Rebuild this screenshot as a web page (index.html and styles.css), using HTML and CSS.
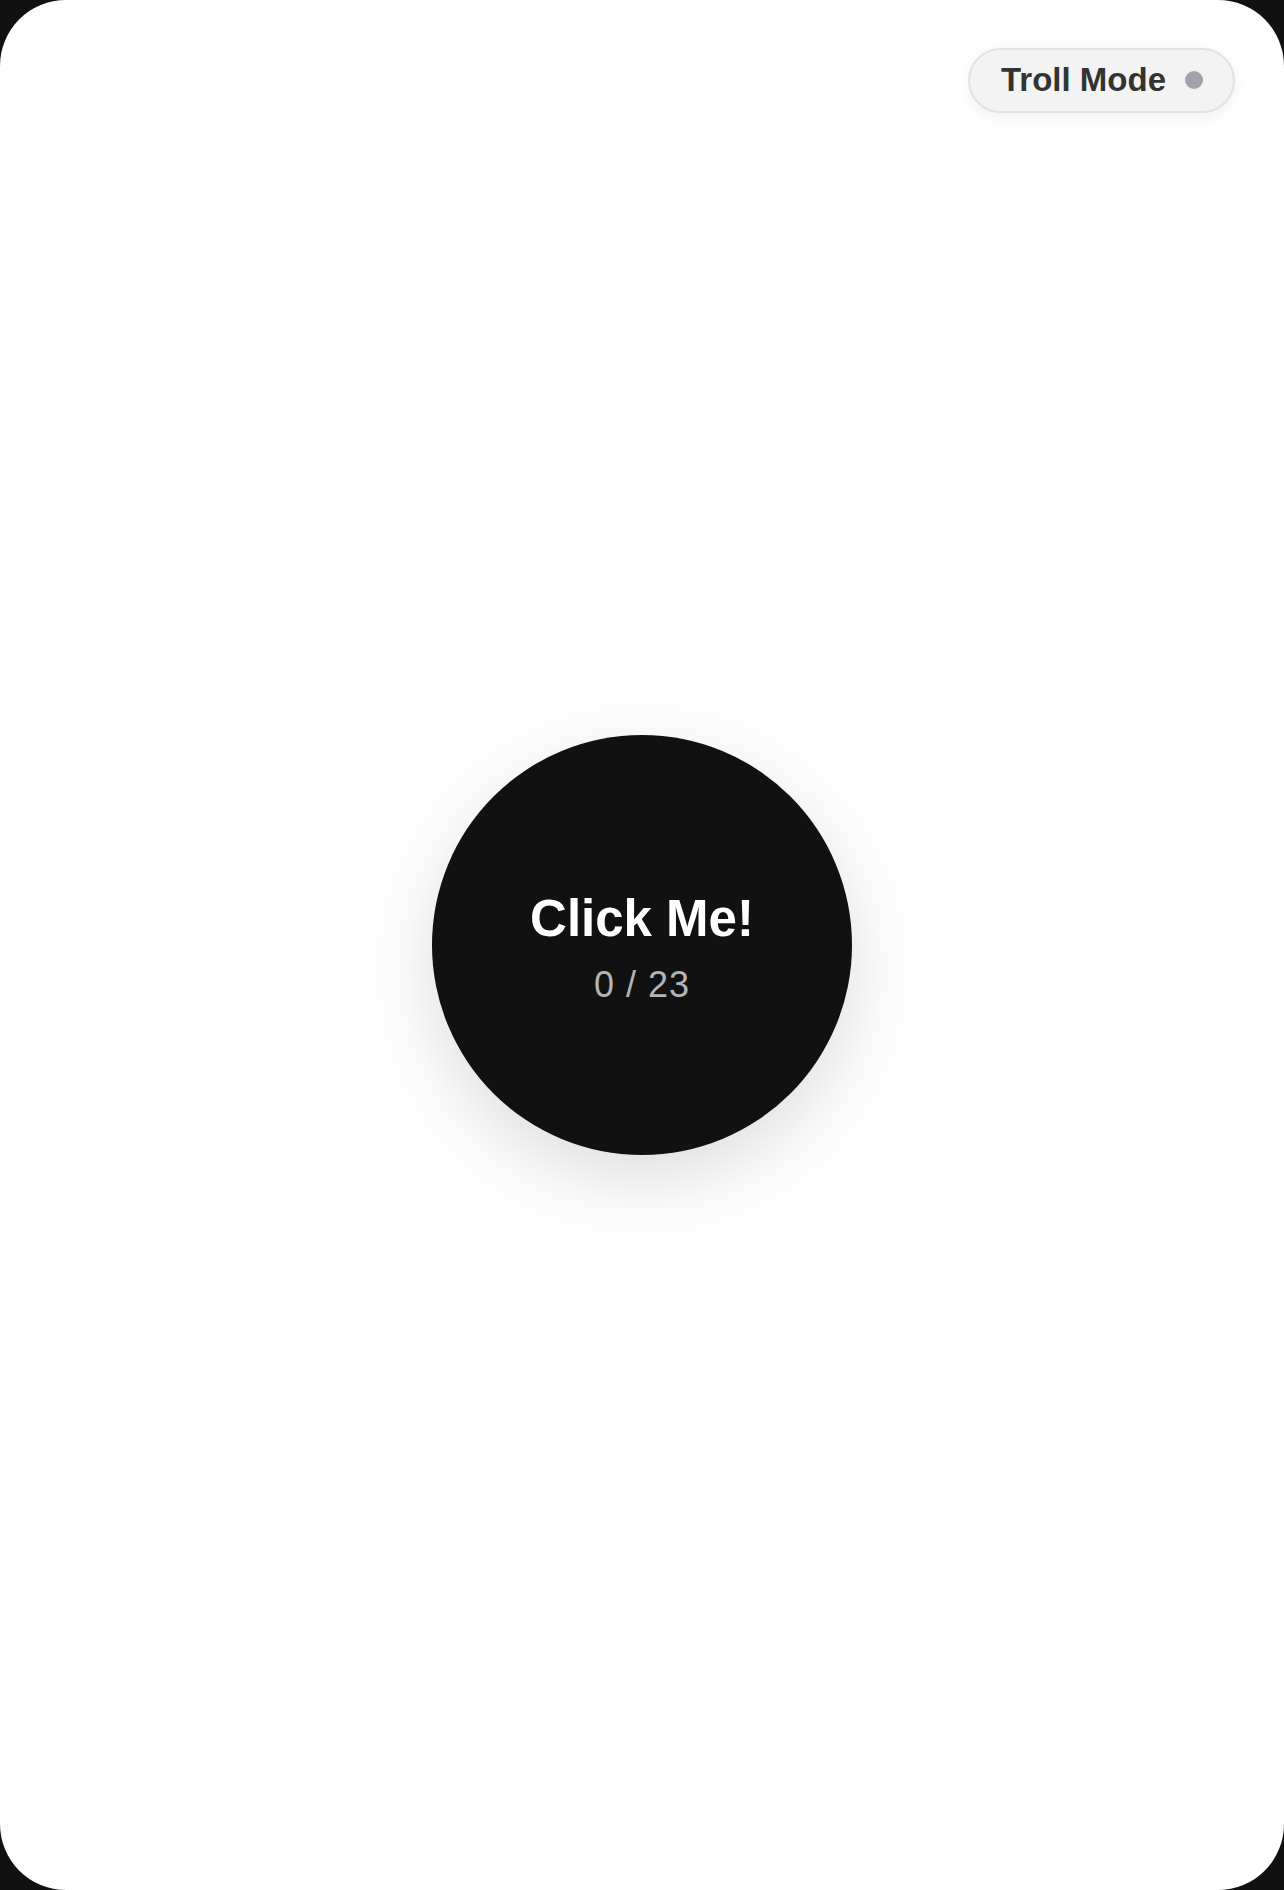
FILE: index.html
```html
<!DOCTYPE html>
<html lang="en">
<head>
<meta charset="utf-8">
<title>Click Me</title>
<link rel="stylesheet" href="styles.css">
</head>
<body>
<div class="frame">
  <header class="topbar">
    <button class="troll-toggle" type="button">
      <span class="troll-label">Troll Mode</span>
      <span class="troll-dot"></span>
    </button>
  </header>
  <main class="stage">
    <button class="click-button" type="button">
      <span class="click-title">Click Me!</span>
      <span class="click-count">0 / 23</span>
    </button>
  </main>
</div>
</body>
</html>
```

FILE: styles.css
```css
* { box-sizing: border-box; }
html, body {
  margin: 0;
  padding: 0;
  height: 100%;
}
body {
  background: #111111;
  font-family: "Liberation Sans", Arial, sans-serif;
  overflow: hidden;
}
.frame {
  position: relative;
  width: 100vw;
  height: 100vh;
  background: #fefefe;
  border-radius: 66px;
  display: flex;
  flex-direction: column;
}
.topbar {
  position: absolute;
  top: 48px;
  right: 49px;
}
.troll-toggle {
  display: flex;
  align-items: center;
  gap: 19px;
  height: 65px;
  padding: 0 30px 2px 31px;
  background: #f3f3f4;
  border: 2px solid #e2e2e5;
  border-radius: 999px;
  box-shadow: 0 4px 14px rgba(0, 0, 0, 0.05);
  font-family: inherit;
  cursor: pointer;
}
.troll-label {
  font-size: 33px;
  font-weight: 700;
  color: #333333;
}
.troll-dot {
  width: 18px;
  height: 18px;
  border-radius: 50%;
  background: #a1a1aa;
}
.stage {
  flex: 1;
  display: flex;
  align-items: center;
  justify-content: center;
}
.click-button {
  width: 420px;
  height: 420px;
  border-radius: 50%;
  border: none;
  background: #111111;
  box-shadow: 0 24px 70px rgba(0, 0, 0, 0.13);
  display: flex;
  flex-direction: column;
  align-items: center;
  justify-content: center;
  gap: 18px;
  font-family: inherit;
  cursor: pointer;
  padding: 6px 0 0;
}
.click-title {
  font-size: 51px;
  font-weight: 700;
  color: #ffffff;
  line-height: 1.1;
}
.click-count {
  font-size: 36px;
  color: #b4b4b4;
  line-height: 1.1;
  letter-spacing: 1px;
}
```
